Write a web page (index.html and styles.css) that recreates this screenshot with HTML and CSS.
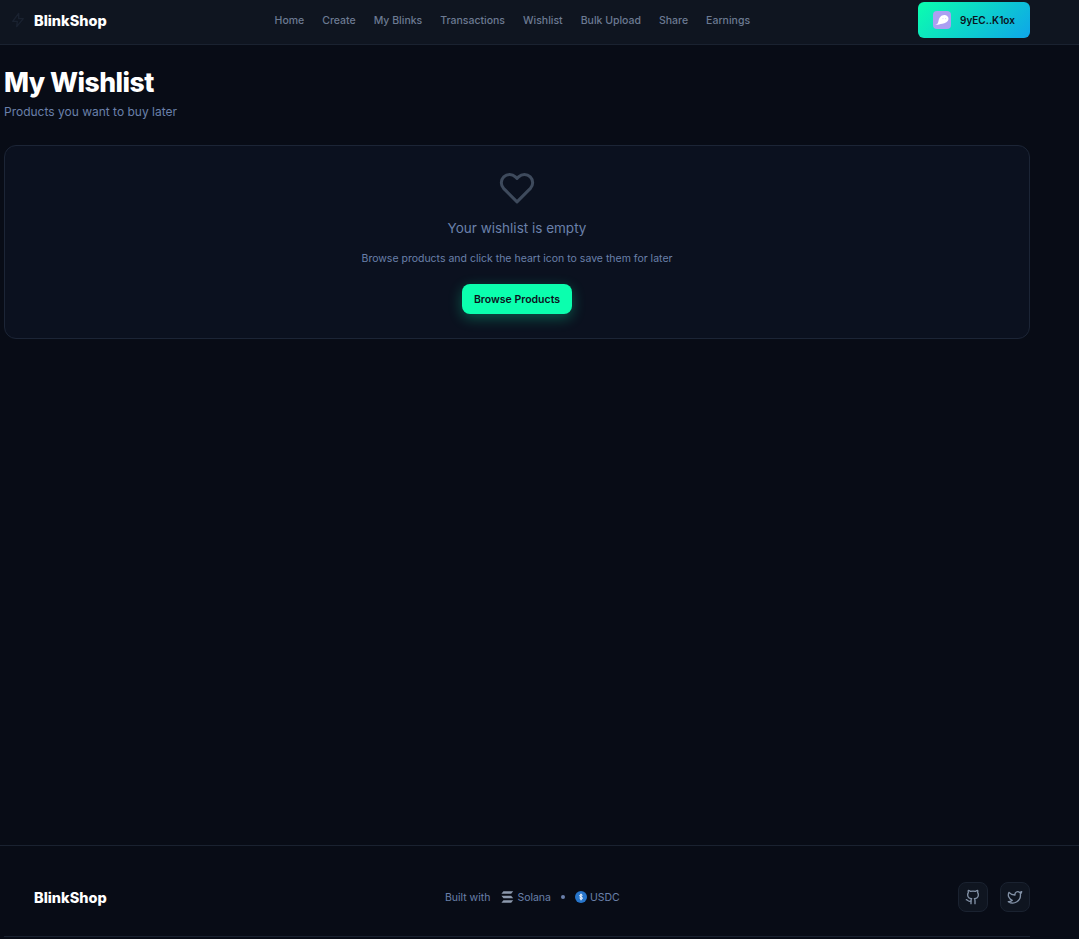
FILE: index.html
```html
<!DOCTYPE html>
<html>
<head>
	<title>BlinkShop</title>
	<link rel="stylesheet" href="styles.css">
</head>
<body>
	<header class="topbar">
		<div class="topbar-inner">
			<a class="logo">
				<svg class="logo-bolt" viewBox="0 0 24 24" fill="none" stroke="#1a2230" stroke-width="2" stroke-linejoin="round"><path d="M13 2 4 14h7l-1 8 10-12h-7z"/></svg>
				<span>BlinkShop</span>
			</a>
			<nav class="nav">
				<a>Home</a>
				<a>Create</a>
				<a>My Blinks</a>
				<a>Transactions</a>
				<a>Wishlist</a>
				<a>Bulk Upload</a>
				<a>Share</a>
				<a>Earnings</a>
			</nav>
			<button class="wallet">
				<span class="wallet-icon">
					<svg viewBox="0 0 18 18" width="18" height="18"><path d="M2.200 13.800c2.500-.3 2.900-2 3.300-3.800C6 7 8 4 11.200 4c2.700 0 4.300 1.800 4.300 3.800 0 3-3.600 4.500-6.200 5-2.500.4-5 1.300-7.100 1z" fill="#fff"/><circle cx="10" cy="7.600" r=".6" fill="#d8d2fa"/><circle cx="12.600" cy="7.600" r=".6" fill="#d8d2fa"/></svg>
				</span>
				<span>9yEC..K1ox</span>
			</button>
		</div>
	</header>

	<main class="page">
		<h1>My Wishlist</h1>
		<p class="sub">Products you want to buy later</p>
		<section class="card">
			<svg class="heart" viewBox="0 0 24 24" fill="none" stroke="#3e4a5c" stroke-width="2" stroke-linecap="round" stroke-linejoin="round"><path d="M20.840 4.610a5.500 5.500 0 0 0-7.780 0L12 5.670l-1.060-1.060a5.500 5.500 0 0 0-7.780 7.780l1.060 1.060L12 21.230l7.780-7.780 1.060-1.060a5.500 5.500 0 0 0 0-7.780z"/></svg>
			<h2>Your wishlist is empty</h2>
			<p>Browse products and click the heart icon to save them for later</p>
			<button class="browse">Browse Products</button>
		</section>
	</main>

	<footer class="footer">
		<div class="footer-inner">
			<a class="logo"><span>BlinkShop</span></a>
			<div class="built">
				<span class="built-label">Built with</span>
				<span class="tech">
					<svg viewBox="0 0 16 14" width="13" height="12" fill="#8c99ad"><path d="M3 0h12l-2.500 3H0.500z"/><path d="M0.500 5.500h12l2.500 3H3z"/><path d="M3 11h12l-2.500 3H0.500z"/></svg>
					Solana
				</span>
				<span class="dot"></span>
				<span class="tech">
					<svg viewBox="0 0 12 12" width="12" height="12"><circle cx="6" cy="6" r="6" fill="#2775ca"/><path d="M7.500 4.300C7.200 3.700 4.600 3.400 4.600 4.800c0 1.400 2.900.9 2.900 2.300 0 1.400-2.600 1.200-3-.4M6 2.700v6.600" fill="none" stroke="#fff" stroke-width="1"/></svg>
					USDC
				</span>
			</div>
			<div class="socials">
				<a class="social">
					<svg viewBox="0 0 24 24" width="16" height="16" fill="none" stroke="#8493a8" stroke-width="2" stroke-linecap="round" stroke-linejoin="round"><path d="M15 22v-4a4.800 4.800 0 0 0-1-3.500c3 0 6-2 6-5.500.08-1.250-.27-2.480-1-3.500.28-1.150.28-2.350 0-3.500 0 0-1 0-3 1.500-2.640-.5-5.360-.5-8 0C6 2 5 2 5 2c-.3 1.150-.3 2.350 0 3.500A5.400 5.400 0 0 0 4 9c0 3.500 3 5.500 6 5.500-.39.49-.68 1.050-.85 1.650-.17.600-.22 1.230-.15 1.850v4"/><path d="M9 18c-4.510 2-5-2-7-2"/></svg>
				</a>
				<a class="social">
					<svg viewBox="0 0 24 24" width="16" height="16" fill="none" stroke="#8493a8" stroke-width="2" stroke-linecap="round" stroke-linejoin="round"><path d="M22 4s-.7 2.100-2 3.400c1.600 10-9.400 17.300-18 11.600 2.200.1 4.400-.6 6-2C3 15.500.5 9.600 3 5c2.200 2.600 5.600 4.100 9 4-.9-4.200 4-6.600 7-3.800 1.100 0 3-1.200 3-1.200z"/></svg>
				</a>
			</div>
		</div>
	</footer>
</body>
</html>
```

FILE: styles.css
```css
*{
	box-sizing:border-box;
}
html,body{
	margin:0;
	height:100%;
}
body{
	background-color:#080c16;
	font-family:"Inter","Liberation Sans",sans-serif;
	color:#fff;
	display:flex;
	flex-direction:column;
	min-height:939px;
}
button{
	font-family:inherit;
	border:0;
}

/* top bar */
.topbar{
	height:45px;
	background-color:#0f1520;
	border-bottom:1px solid #1a2230;
}
.topbar-inner{
	width:1030px;
	height:44px;
	padding-left:10px;
	padding-bottom:4px;
	display:flex;
	align-items:center;
	justify-content:space-between;
}
.logo{
	display:flex;
	align-items:center;
	gap:8px;
	font-weight:800;
	font-size:14.500px;
}
.logo-bolt{
	width:16px;
	height:16px;
}
.nav{
	display:flex;
	gap:18px;
}
.nav a{
	font-size:10.500px;
	font-weight:500;
	color:#6c7a92;
}
.wallet{
	width:112px;
	height:36px;
	padding-left:15px;
	display:flex;
	align-items:center;
	gap:9px;
	border-radius:6px;
	background:linear-gradient(135deg,#0bffae,#0ea5e9);
	color:#0b1220;
	font-size:10px;
	font-weight:600;
}
.wallet-icon{
	width:18px;
	height:18px;
	border-radius:4px;
	background-color:#ab9ff2;
	display:flex;
}

/* content */
.page{
	flex:1;
	width:1034px;
	padding:19px 4px 0;
}
h1{
	margin:0;
	font-weight:800;
	font-size:26.500px;
	letter-spacing:-.5px;
	line-height:36px;
}
.sub{
	margin:3px 0 0;
	font-size:12px;
	line-height:18px;
	color:#6a80aa;
}
.card{
	margin-top:24px;
	height:194px;
	border:1px solid #1c2536;
	border-radius:12px;
	background-color:#0b111f;
	display:flex;
	flex-direction:column;
	align-items:center;
	padding-top:24px;
}
.heart{
	width:36px;
	height:36px;
}
.card h2{
	margin:11px 0 0;
	font-size:13.500px;
	font-weight:400;
	line-height:22px;
	color:#6a80aa;
}
.card p{
	margin:12px 0 0;
	font-size:10.500px;
	line-height:16px;
	color:#6a80aa;
}
.browse{
	margin-top:17px;
	width:110px;
	height:30px;
	border-radius:8px;
	background-color:#0bffae;
	box-shadow:0 4px 14px rgba(11,255,174,.3);
	color:#0b1220;
	font-size:10.500px;
	font-weight:600;
}

/* footer */
.footer{
	height:94px;
	border-top:1px solid #1a2230;
}
.footer-inner{
	width:1026px;
	height:91px;
	margin-left:4px;
	padding:12px 0 0 30px;
	border-bottom:1px solid #1a2230;
	display:flex;
	align-items:center;
	justify-content:space-between;
}
.built{
	display:flex;
	align-items:center;
	gap:10px;
	font-size:10.500px;
	color:#6a80aa;
}
.built-label{
	margin-right:1px;
}
.tech{
	display:flex;
	align-items:center;
	gap:3px;
}
.dot{
	width:4px;
	height:4px;
	border-radius:50%;
	background-color:#6a80aa;
}
.socials{
	display:flex;
	gap:12px;
}
.social{
	width:30px;
	height:30px;
	border:1px solid #1a2230;
	border-radius:8px;
	background-color:#0f1520;
	display:flex;
	align-items:center;
	justify-content:center;
}
```
